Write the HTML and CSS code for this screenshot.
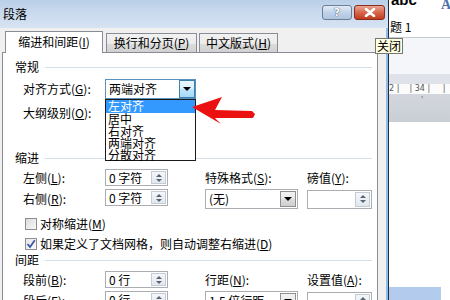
FILE: index.html
```html
<!DOCTYPE html>
<html lang="zh-CN">
<head>
<meta charset="utf-8">
<title>段落</title>
<link rel="stylesheet" href="styles.css">
</head>
<body>
<div class="screen">
  <div class="dialog">
    <div class="titlebar">
      <span class="title">段落</span>
      <div class="tb-buttons">
        <div class="tb-btn help">?</div>
        <div class="tb-btn close">
          <svg width="12" height="9" viewBox="0 0 12 9"><path d="M2 1 L10 8 M10 1 L2 8" stroke="#fff" stroke-width="2.6" stroke-linecap="round"/></svg>
        </div>
      </div>
    </div>
    <div class="body">
      <div class="tabs">
        <div class="tab active t1">缩进和间距(<u>I</u>)</div>
        <div class="tab t2">换行和分页(<u>P</u>)</div>
        <div class="tab t3">中文版式(<u>H</u>)</div>
      </div>
      <div class="page">
        <div class="group first">常规</div>
        <div class="row r-align">
          <span class="label">对齐方式(<u>G</u>):</span>
          <div class="combo hot w91"><span class="val">两端对齐</span><span class="dd hot"><i></i></span></div>
        </div>
        <div class="row r-outline">
          <span class="label">大纲级别(<u>O</u>):</span>
          <div class="combo w91"><span class="val">正文文本</span><span class="dd"><i></i></span></div>
        </div>

        <div class="group g-indent">缩进</div>
        <div class="grid g1">
          <span class="label">左侧(<u>L</u>):</span>
          <div class="spin"><span class="val">0 字符</span><span class="sb"><b class="up"></b><b class="dn"></b></span></div>
          <span></span>
          <span class="label">特殊格式(<u>S</u>):</span>
          <span></span>
          <span class="label">磅值(<u>Y</u>):</span>

          <span class="label">右侧(<u>R</u>):</span>
          <div class="spin"><span class="val">0 字符</span><span class="sb"><b class="up"></b><b class="dn"></b></span></div>
          <span></span>
          <div class="combo tall"><span class="val">(无)</span><span class="dd"><i></i></span></div>
          <span></span>
          <div class="spin short"><span class="val"></span><span class="sb"><b class="up"></b><b class="dn"></b></span></div>
        </div>

        <div class="check"><span class="box"></span><span>对称缩进(<u>M</u>)</span></div>
        <div class="check"><span class="box on"><svg width="10" height="10" viewBox="0 0 10 10"><path d="M1.5 5 L4 8 L8.8 1.2" fill="none" stroke="#3c5aa8" stroke-width="1.8"/></svg></span><span>如果定义了文档网格，则自动调整右缩进(<u>D</u>)</span></div>

        <div class="group g-space">间距</div>
        <div class="grid g2">
          <span class="label">段前(<u>B</u>):</span>
          <div class="spin"><span class="val">0 行</span><span class="sb"><b class="up"></b><b class="dn"></b></span></div>
          <span></span>
          <span class="label">行距(<u>N</u>):</span>
          <span></span>
          <span class="label">设置值(<u>A</u>):</span>

          <span class="label">段后(<u>F</u>):</span>
          <div class="spin"><span class="val">0 行</span><span class="sb"><b class="up"></b><b class="dn"></b></span></div>
          <span></span>
          <div class="combo tall"><span class="val">1.5 倍行距</span><span class="dd"><i></i></span></div>
          <span></span>
          <div class="spin short"><span class="val"></span><span class="sb"><b class="up"></b><b class="dn"></b></span></div>
        </div>

        <ul class="dropdown">
          <li class="sel">左对齐</li>
          <li>居中</li>
          <li>右对齐</li>
          <li>两端对齐</li>
          <li>分散对齐</li>
        </ul>
      </div>
    </div>
  </div>

  <div class="word">
    <div class="gallery">
      <span class="abc">abc</span>
      <span class="bigA">A</span>
      <span class="style1">题 1</span>
    </div>
    <div class="ribbon-low"></div>
    <div class="ruler-top"></div>
    <div class="ruler"><span>2 |&nbsp;&nbsp;&nbsp; | 34 |&nbsp;&nbsp;&nbsp;&nbsp; |</span></div>
    <div class="ruler-bottom"><span class="tick">'</span></div>
    <div class="doc"><div class="selection"></div></div>
  </div>

  <div class="tooltip">关闭</div>

  <svg class="arrow" width="450" height="300" viewBox="0 0 450 300">
    <polygon points="192,107 222,97 215,110 252,111 255,114 253,118 215,118 221,124" fill="#ec1111"/>
  </svg>
</div>
</body>
</html>
```

FILE: styles.css
```css
* { box-sizing: border-box; }
html, body { margin: 0; padding: 0; }
body {
  width: 450px;
  height: 300px;
  overflow: hidden;
  background: #fff;
  font-family: "Noto Sans CJK SC", "Liberation Sans", sans-serif;
  font-size: 12px;
  color: #000;
}
u { text-decoration: underline; text-underline-offset: 1px; }

.screen {
  position: relative;
  display: flex;
  width: 450px;
  height: 300px;
}

/* ---------- dialog ---------- */
.dialog {
  width: 389px;
  flex: none;
  display: flex;
  flex-direction: column;
  border-right: 1px solid #1e2c42;
}
.titlebar {
  height: 28px;
  flex: none;
  display: flex;
  align-items: center;
  justify-content: space-between;
  padding: 0 3px 0 3px;
  background: linear-gradient(#b9cfe8, #c9daee 45%, #d6e3f2);
}
.title { font-size: 12px; line-height: 12px; color: #000; margin-top: -1px; }
.tb-buttons { display: flex; gap: 2px; align-self: flex-start; margin-top: 5px; }
.tb-btn {
  height: 15px;
  border-radius: 3px;
  display: flex;
  align-items: center;
  justify-content: center;
}
.help {
  width: 30px;
  border: 1px solid #6c7f98;
  background: linear-gradient(#e1ebf6, #c1d3e8 50%, #aec4de);
  color: #fff;
  font-family: "DejaVu Sans", sans-serif;
  font-weight: bold;
  font-size: 11px;
  line-height: 11px;
  text-shadow: 0 0 1px #3d5272, 0 0 1px #3d5272;
}
.close {
  width: 31px;
  border: 1px solid #8a2b1e;
  background: linear-gradient(#eaa593, #d6674c 50%, #c23b1c);
}

.body {
  flex: 1;
  background: #f0f0f0;
  padding: 3px 8px 0 2px;
  border-right: 2px solid #8fbde6;
  display: flex;
  flex-direction: column;
}
.tabs {
  height: 22px;
  flex: none;
  display: flex;
  align-items: flex-end;
  padding-left: 3px;
  margin-bottom: -1px;
}
.tab {
  height: 20px;
  border: 1px solid #898c95;
  border-bottom: none;
  background: linear-gradient(#f2f2f2, #ebebeb 50%, #dcdcdc 51%, #cfcfcf);
  display: flex;
  align-items: center;
  justify-content: center;
  line-height: 12px;
  padding-bottom: 1px;
}
.tab.active {
  height: 22px;
  background: #fff;
  position: relative;
  z-index: 2;
  padding-bottom: 2px;
}
.t1 { width: 98px; margin-right: 3px; }
.t2 { width: 91px; margin-right: 2px; }
.t3 { width: 79px; }

.page {
  position: relative;
  flex: 1;
  background: #fff;
  border: 1px solid #898c95;
  padding-left: 12px;
}
.group {
  display: flex;
  align-items: center;
  height: 12px;
  line-height: 12px;
}
.group::after {
  content: "";
  flex: 1;
  height: 1px;
  background: #d5dfe5;
  margin: 0 5px 0 6px;
}
.group.first { margin-top: 8px; }
.g-indent { margin-top: 29px; }
.g-space { margin-top: 0; }

.row {
  display: flex;
  align-items: center;
  height: 20px;
  padding-left: 8px;
}
.r-align { margin-top: 6px; }
.r-outline { margin-top: 4px; }
.label { width: 82px; flex: none; line-height: 12px; white-space: nowrap; }

.combo {
  height: 20px;
  border: 1px solid #abadb3;
  display: flex;
  align-items: stretch;
  background: #fff;
}
.combo.w91 { width: 91px; }
.combo.hot { border-color: #5c93bc; }
.combo .val { flex: 1; padding-left: 3px; line-height: 18px; white-space: nowrap; overflow: hidden; }
.dd {
  width: 16px;
  flex: none;
  margin: 1px;
  border: 1px solid #8f8f8f;
  background: linear-gradient(#f2f2f2, #ebebeb 50%, #dddddd 51%, #cfcfcf);
  display: flex;
  align-items: center;
  justify-content: center;
}
.dd.hot {
  margin: 0;
  border-color: #3c7fb1;
  background: linear-gradient(#eaf6fd, #d9f0fc 50%, #bee6fd 51%, #a7d9f5);
}
.dd i {
  width: 0; height: 0;
  border-left: 4px solid transparent;
  border-right: 4px solid transparent;
  border-top: 4px solid #000;
}

.grid {
  display: grid;
  grid-template-columns: 82px 63px 37px 93px 9px 65px;
  grid-template-rows: 17px 20px;
  row-gap: 3px;
  align-items: center;
  padding-left: 8px;
  margin-top: 5px;
}
.grid .combo.tall { height: 20px; }
.spin {
  height: 17px;
  border: 1px solid #abadb3;
  display: flex;
  align-self: start;
}
.spin.short { height: 19px; align-self: center; }
.spin .val { flex: 1; padding-left: 3px; line-height: 15px; white-space: nowrap; }
.sb {
  width: 15px;
  flex: none;
  margin: 1px 1px 1px 0;
  border: 1px solid #c5cbd4;
  background: linear-gradient(#f4f7fa, #e2e8ef);
  display: flex;
  flex-direction: column;
  align-items: center;
  justify-content: center;
  gap: 2px;
}
.sb b { width: 0; height: 0; border-left: 3px solid transparent; border-right: 3px solid transparent; }
.sb .up { border-bottom: 3px solid #5a6473; }
.sb .dn { border-top: 3px solid #5a6473; }

.check {
  display: flex;
  align-items: center;
  height: 20px;
  padding-left: 10px;
  gap: 3px;
  line-height: 12px;
  white-space: nowrap;
}
.grid.g1 + .check { margin-top: 5px; }
.box {
  width: 12px;
  height: 12px;
  border: 1px solid #8f8f8f;
  background: linear-gradient(135deg, #dcdcdc, #f8f8f8);
  display: flex;
  align-items: center;
  justify-content: center;
}
.box.on { background: linear-gradient(135deg, #e6e6e6, #fbfbfb); }

.dropdown {
  position: absolute;
  left: 102px;
  top: 46px;
  width: 91px;
  height: 62px;
  margin: 0;
  padding: 0;
  list-style: none;
  background: #fff;
  border: 1px solid #1a1a1a;
  z-index: 3;
}
.dropdown li {
  height: 12px;
  line-height: 12px;
  font-size: 12px;
  padding-left: 2px;
  white-space: nowrap;
}
.dropdown li.sel { background: #3399ff; color: #fff; height: 13px; }

/* ---------- word window ---------- */
.word {
  flex: 1;
  display: flex;
  flex-direction: column;
  overflow: hidden;
}
.gallery {
  position: relative;
  height: 38px;
  flex: none;
  background: #fff;
  border-bottom: 1px solid #c6ccd4;
}
.abc {
  position: absolute;
  left: 2px;
  top: -9px;
  font-family: "Liberation Sans", sans-serif;
  font-weight: bold;
  font-size: 15px;
}
.bigA {
  position: absolute;
  left: 52px;
  top: -3px;
  font-family: "Liberation Serif", serif;
  font-weight: bold;
  font-size: 14px;
  color: #4f71a8;
}
.style1 {
  position: absolute;
  left: 1px;
  top: 21px;
  font-size: 12px;
  line-height: 12px;
}
.ribbon-low { height: 36px; flex: none; background: #f4f6f9; }
.ruler-top { height: 10px; flex: none; background: #dfe3e9; }
.ruler {
  height: 10px;
  flex: none;
  background: #fbfbfb;
  font-family: "DejaVu Sans", sans-serif;
  font-size: 8px;
  line-height: 10px;
  color: #555;
  white-space: nowrap;
  overflow: hidden;
}
.ruler-bottom {
  height: 28px;
  flex: none;
  background: linear-gradient(#d3d7dd, #c9ced5);
  font-size: 8px;
  color: #666;
  padding-left: 32px;
  line-height: 12px;
}
.doc { flex: 1; background: #fff; position: relative; }
.selection {
  position: absolute;
  left: 0;
  bottom: 0;
  width: 52px;
  height: 13px;
  background: #b3cbed;
}

.tooltip {
  position: absolute;
  left: 375px;
  top: 38px;
  width: 28px;
  height: 16px;
  border: 1px solid #767676;
  background: #ffffe1;
  font-size: 12px;
  line-height: 14px;
  padding-left: 1px;
  z-index: 5;
}
.arrow {
  position: absolute;
  left: 0;
  top: 0;
  pointer-events: none;
  z-index: 6;
}
```
